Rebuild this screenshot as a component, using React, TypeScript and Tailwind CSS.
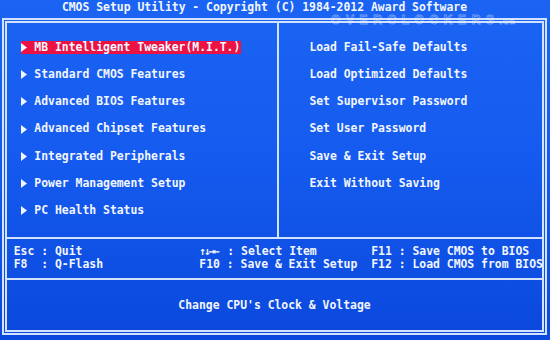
const leftItems = [
  "MB Intelligent Tweaker(M.I.T.)",
  "Standard CMOS Features",
  "Advanced BIOS Features",
  "Advanced Chipset Features",
  "Integrated Peripherals",
  "Power Management Setup",
  "PC Health Status",
];

const rightItems = [
  "Load Fail-Safe Defaults",
  "Load Optimized Defaults",
  "Set Supervisor Password",
  "Set User Password",
  "Save & Exit Setup",
  "Exit Without Saving",
];

const Arrow = () => (
  <span className="inline-flex w-[13.75px] items-center pl-[0.5px]">
    <svg width="6" height="9" viewBox="0 0 6 9">
      <path d="M0 0 L6 4.5 L0 9 Z" fill="#f2f6ff" />
    </svg>
  </span>
);

const App = () => {
  return (
    <div className="relative w-[550px] h-[340px] overflow-hidden bg-[linear-gradient(180deg,#1b64f3_0%,#155bef_45%,#0b48dd_100%)] text-[#f2f6ff] font-['DejaVu_Sans_Mono',monospace] font-bold text-[11.42px] leading-[13.6px]">
      {/* title */}
      <div className="h-[18px] pl-[61.9px] pt-[0.5px] whitespace-pre">
        CMOS Setup Utility - Copyright (C) 1984-2012 Award Software
      </div>

      {/* watermark */}
      <span className="absolute left-[331px] top-[14px] font-['Liberation_Sans',sans-serif] font-bold text-[12px] leading-[12px] tracking-[5.6px] text-transparent [-webkit-text-stroke:0.8px_rgba(225,235,255,0.45)]">
        OVERCLOCKERS<span className="text-[9px] tracking-[1px]">.ua</span>
      </span>

      <div className="ml-[2px] w-[545px] h-[317px] border-[5px] border-double border-[#d3e3ff] flex flex-col">
        {/* main menu */}
        <div className="h-[214px] flex">
          <div className="w-[270px] pl-[13.6px] pt-[17.8px] flex flex-col gap-[13.6px]">
            {leftItems.map((item, i) => (
              <div
                key={item}
                className={
                  i === 0
                    ? "h-[13.6px] flex items-center self-start bg-[#ec1244] pr-[1px]"
                    : "h-[13.6px] flex items-center self-start"
                }
              >
                <Arrow />
                <span className="whitespace-pre">{item}</span>
              </div>
            ))}
          </div>
          <div className="w-[2px] bg-[#d3e3ff]" />
          <div className="flex-1 pl-[30.4px] pt-[17.8px] flex flex-col gap-[13.6px]">
            {rightItems.map((item) => (
              <div key={item} className="h-[13.6px] flex items-center whitespace-pre">
                {item}
              </div>
            ))}
          </div>
        </div>

        <div className="h-[2px] bg-[#d3e3ff]" />

        {/* key help */}
        <div className="h-[38.5px] pl-[6.75px] pt-[5.8px] grid grid-cols-[185.6px_171.9px_1fr] auto-rows-[13.6px] whitespace-pre">
          <div>Esc : Quit</div>
          <div>
            <span className="inline-block w-[28px] text-[11px] tracking-[-2px]">↑↓→←</span>
            <span>: Select Item</span>
          </div>
          <div>F11 : Save CMOS to BIOS</div>
          <div>F8  : Q-Flash</div>
          <div>F10 : Save &amp; Exit Setup</div>
          <div>F12 : Load CMOS from BIOS</div>
        </div>

        <div className="h-[2px] bg-[#d3e3ff]" />

        {/* item help */}
        <div className="flex-1 pt-[19.7px] text-center whitespace-pre">
          Change CPU's Clock &amp; Voltage
        </div>
      </div>
    </div>
  );
};

export default App;
